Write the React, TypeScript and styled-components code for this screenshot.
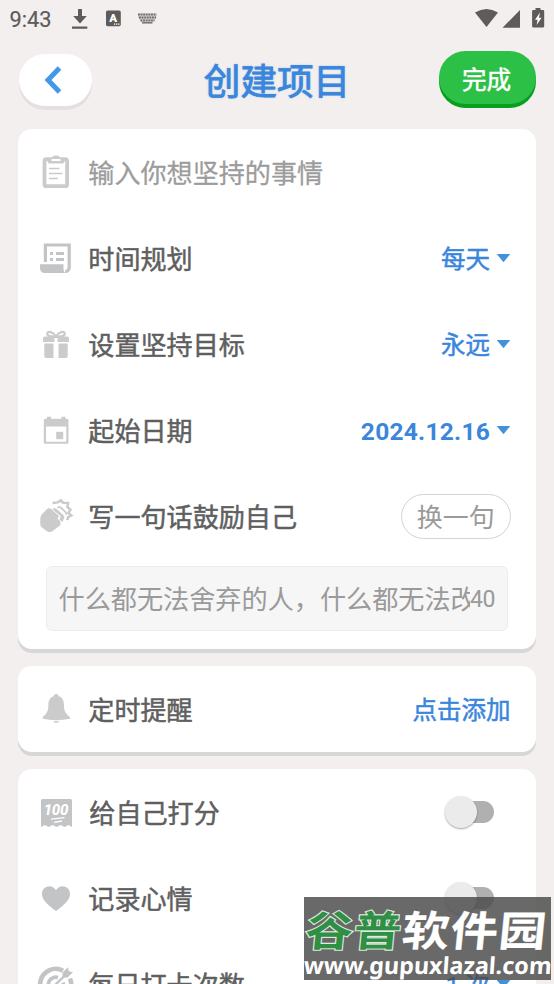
import React from 'react';
import styled, { createGlobalStyle } from 'styled-components';

const Global = createGlobalStyle`
  * { box-sizing: border-box; }
  html, body { margin: 0; padding: 0; background: #f2efee; overflow: hidden; }
  body { font-family: Roboto, "Noto Sans CJK SC", sans-serif; }
`;

const BLUE = '#3a86dc';

const Screen = styled.div`
  position: relative;
  width: 554px;
  height: 984px;
  overflow: hidden;
  background: #f2efee;
`;

const StatusBar = styled.div`
  height: 38px;
  display: flex;
  align-items: center;
  justify-content: space-between;
  padding: 0 9px;
  color: #5e5b5a;
`;

const StatusGroup = styled.div`
  display: flex;
  align-items: center;
`;

const Clock = styled.span`
  width: 62px;
  padding: 2px 0 0 0.5px;
  font-size: 21.8px;
  line-height: 38px;
  -webkit-text-stroke: 0.2px #5e5b5a;
`;

const Header = styled.header`
  height: 91px;
  display: flex;
  align-items: flex-start;
  justify-content: space-between;
  padding: 13px 18px 0 18.5px;
`;

const BackButton = styled.button`
  width: 73.5px;
  height: 52px;
  margin-top: 3px;
  padding: 0 4px 0 0;
  border: 0;
  border-radius: 26px;
  background: #fff;
  box-shadow: 0 4px 0 #e3e0df;
  display: flex;
  align-items: center;
  justify-content: center;
`;

const Title = styled.h1`
  margin: 0 0 0 23px;
  padding-top: 3px;
  font-size: 36.6px;
  line-height: 58px;
  font-weight: 400;
  color: ${BLUE};
  -webkit-text-stroke: 0.8px ${BLUE};
  text-shadow: 0 0 2px rgba(58, 134, 220, 0.5);
`;

const DoneButton = styled.button`
  width: 97px;
  height: 53px;
  padding: 7px 2px 0 0;
  border: 0;
  border-radius: 27px;
  background: #2dc046;
  box-shadow: 0 4px 0 #06a01e;
  font: 400 24.6px/46px Roboto, "Noto Sans CJK SC", sans-serif;
  color: #fff;
  -webkit-text-stroke: 0.5px #fff;
`;

const Card = styled.section<{ $bottom?: number }>`
  width: 517.5px;
  margin: 0 0 17px 18px;
  padding-bottom: ${p => p.$bottom ?? 0}px;
  border-radius: 14px;
  background: #fff;
  box-shadow: 0 4px 0 #d8d7d7;
`;

const RowBox = styled.div`
  height: 86px;
  display: flex;
  align-items: center;
  padding: 0 25px 0 20px;
`;

const Icon = styled.svg`
  width: 36px;
  height: 36px;
  margin-right: 14px;
  flex: none;
  overflow: visible;
`;

const Label = styled.span<{ $muted?: boolean; $shift?: number }>`
  flex: 1;
  margin-left: ${p => p.$shift ?? 0.3}px;
  padding-top: 3px;
  font-size: 26.1px;
  line-height: 40px;
  white-space: nowrap;
  color: ${p => (p.$muted ? '#9c9c9c' : '#5f5f5f')};
  -webkit-text-stroke: ${p => (p.$muted ? '0.3px #9c9c9c' : '0.5px #5f5f5f')};
`;

const Value = styled.span<{ $bold?: boolean }>`
  padding-top: 3px;
  font-size: 24.5px;
  line-height: 40px;
  font-weight: ${p => (p.$bold ? 700 : 400)};
  letter-spacing: ${p => (p.$bold ? '0.25px' : '0')};
  color: ${BLUE};
  -webkit-text-stroke: ${p => (p.$bold ? '0' : '0.5px')} ${BLUE};
`;

const Caret = styled.span`
  width: 14px;
  height: 8.5px;
  margin: 0 0 0 6.5px;
  background: #4391da;
  clip-path: polygon(0 0, 100% 0, 50% 100%);
`;

const SwapButton = styled.button`
  width: 109.5px;
  height: 45px;
  padding: 3px 0 0;
  border: 1px solid #d3d3d3;
  border-radius: 23px;
  background: #fff;
  font: 400 26px/40px Roboto, "Noto Sans CJK SC", sans-serif;
  color: #9a9a9a;
`;

const Motto = styled.div`
  width: 462px;
  height: 65px;
  margin: 7px 0 0 28px;
  padding: 2px 12px 0 11.5px;
  display: flex;
  align-items: center;
  border: 1px solid #ececec;
  border-radius: 6px;
  background: #f6f6f6;
  color: #9a9a9a;
`;

const MottoText = styled.span`
  flex: 1;
  overflow: hidden;
  white-space: nowrap;
  font-size: 26.15px;
  line-height: 44px;
`;

const Count = styled.span`
  font-size: 23px;
  line-height: 44px;
  letter-spacing: -0.4px;
`;

const Track = styled.span`
  width: 47px;
  height: 22px;
  margin: 0 17px 1px 0;
  display: flex;
  align-items: center;
  border-radius: 11px;
  background: linear-gradient(90deg, transparent 16px, #b0b0b0 16px);
`;

const Thumb = styled.span`
  width: 32px;
  height: 32px;
  margin-left: -2px;
  flex: none;
  border-radius: 50%;
  background: #ebebeb;
  box-shadow: 0 1px 2px rgba(0, 0, 0, 0.35);
`;

const Watermark = styled.div`
  position: absolute;
  left: 303.5px;
  top: 897px;
  width: 247.5px;
  height: 83px;
  background: rgba(75, 75, 75, 0.83);
  overflow: hidden;
`;

const Brand = styled.div`
  height: 56px;
  width: 220px;
  padding: 11px 0 0 2px;
  display: flex;
  font-size: 41.5px;
  line-height: 48px;
  font-weight: 700;
  letter-spacing: 0.9px;
  white-space: nowrap;
  color: #fff;
  transform: scaleX(1.14) skewX(-5deg);
  transform-origin: 0 50%;
  -webkit-text-stroke: 0.2px #fff;
`;

const BrandGreen = styled.span`
  color: #2f8f45;
  -webkit-text-stroke: 2.2px #dcebdd;
  paint-order: stroke fill;
`;

const Site = styled.div`
  width: 247px;
  font: 700 23.3px/24px "Noto Sans", sans-serif;
  letter-spacing: 0;
  white-space: nowrap;
  color: #fff;
  transform: skewX(-4deg);
`;

const G = '#cbcbcb';
const C = '#c2c4c6';

const ClipboardIcon = () => (
  <Icon viewBox="0 0 36 36">
    <rect x="6.5" y="5.2" width="22.6" height="27" rx="2" fill="none" stroke={G} strokeWidth="3.8" />
    <path d="M9.5 4h4.2c.3-1.600 1.800-2.600 4.300-2.600s4 1 4.300 2.600h4.200v3.400q0 2-2 2h-13q-2 0-2-2z" fill={G} />
    <rect x="13.5" y="5" width="9" height="2" fill="#fff" />
    <path d="M11 14.500h10.500M11 19.500h13.500M11 24.500h9" stroke={G} strokeWidth="1.6" />
  </Icon>
);

const ScrollIcon = () => (
  <Icon viewBox="0 0 36 36">
    <path d="M7.400 22V5h23.800v22.500a4 4 0 0 1-4 4" fill="none" stroke={C} strokeWidth="3.2" />
    <path d="M2 24.300h23.500v5.200q0 2.500 2.500 3.500H7q-5 0-5-5z" fill={C} />
    <path d="M12 13.500h3M18 13.500h8M12 19.500h3M18 19.500h8" stroke={C} strokeWidth="2.8" />
  </Icon>
);

const GiftIcon = () => (
  <Icon viewBox="0 0 36 36">
    <path d="M7 10.500h9.500V16H5v-3.500q0-2 2-2zM19.500 10.500H29q2 0 2 2V16H19.500zM6.300 17.500h9.200V32H8.300q-2 0-2-2zM20.500 17.500h9.200V30q0 2-2 2h-7.200z" fill={G} />
    <path d="M18 10.500C15 5.500 10 5 9.300 7.300S12 10.800 18 10.500zM18 10.500c3-5 8-5.500 8.700-3.200S24 10.800 18 10.500z" fill="none" stroke={G} strokeWidth="2.2" />
    <path d="M15 10.500h6V12h-6z" fill={G} />
  </Icon>
);

const CalendarIcon = () => (
  <Icon viewBox="0 0 36 36">
    <path fillRule="evenodd" d="M9 4.800h4v2h10.500v-2h4v2H29q1.500 0 1.500 1.500v22q0 1.500-1.500 1.500H7.300q-1.500 0-1.500-1.500v-22q0-1.500 1.500-1.500H9zM8 14.500v15.200h20.300V14.500z" fill={G} />
    <rect x="18.2" y="19.8" width="7" height="7.4" fill={G} />
  </Icon>
);

const FistIcon = () => (
  <Icon viewBox="0 0 36 36">
    <path d="M2.300 20.500q.2-2.500 1.600-4.200l4.900-5q2-1.800 4.200-.6l2 1.600 6 5.500-1.500 3 2.800 2 .2 4.200-8.200 6.200q-2.600 1.600-5 .4L4 29.500q-1.800-1.300-1.800-4z" fill={G} />
    <path d="M14.200 10.500q2.500-1.600 4.600.3l6.800 6q1.700 1.700.9 3.400l-1.400 3.400q-.9 1.300-2.100 0l-2-2.200 1.200-3.200-7-5.700z" fill={G} stroke="#fff" strokeWidth=".9" />
    <path d="M14.500 5l5.200-.6 3.200-2 2.200 2.300 5 .3-.7 4 3.100 2.800-2.100 3 2.900 2.700-3.300 1.600-.5 3" fill="none" stroke={G} strokeWidth="2.5" />
    <path d="M19.500 9.300q2.500-.6 4 .9l4 4q1 1.300.6 2.600" fill="none" stroke={G} strokeWidth="1.8" />
  </Icon>
);

const BellIcon = () => (
  <Icon viewBox="0 0 36 36">
    <path d="M18.200 3q2.300 0 2.500 2.200c4 1.300 5.200 4.300 5.200 8.800 0 7 2.600 9 6.100 12.300v1.500q-13.800 2.800-27.400 0v-1.500c3.500-3.300 5.800-5.300 5.800-12.300 0-4.500 1.500-7.500 5.300-8.800Q16 3 18.200 3zM14.800 30.200h6.800q-3.400 3.600-6.800 0z" fill={G} />
  </Icon>
);

const ScoreIcon = () => (
  <Icon viewBox="0 0 36 36">
    <path d="M3 6.500Q3 5 4.500 5h28Q34 5 34 6.500V33l-3.500-2-3.800 2-4-2-4 2-4-2-4 2-4-2L3 33z" fill={C} />
    <text x="5.800" y="21.400" fontFamily="Roboto" fontStyle="italic" fontWeight="800" fontSize="15" textLength="24.500" fill="#fff">100</text>
    <path d="M13 25.200l13.500-1.500M16 28.300l8-1.300" stroke="#fff" strokeWidth="1.3" />
  </Icon>
);

const HeartIcon = () => (
  <Icon viewBox="0 0 36 36">
    <path d="M18 31C13 27 4 21.500 4 14c0-8 10-10.500 14-3.700C22 3.500 32 6 32 14c0 7.500-9 13-14 17z" fill={C} />
  </Icon>
);

const TargetIcon = () => (
  <Icon viewBox="0 0 36 36">
    <path d="M25 4.700A15.500 15.500 0 1 0 32 12.500" fill="none" stroke={C} strokeWidth="4.6" />
    <path d="M20 11.500a7.500 7.500 0 1 0 5 5" fill="none" stroke={C} strokeWidth="3.6" />
    <path d="M17 19L29 7.500" stroke={C} strokeWidth="2.4" />
    <path d="M24.500 11.500V6.500l5.500-5.300.8 4 4.200 1-5.500 5.300z" fill={C} />
  </Icon>
);

type RowProps = {
  icon: React.ReactNode;
  label: string;
  muted?: boolean;
  shift?: number;
  children?: React.ReactNode;
};

const Row = ({ icon, label, muted, shift, children }: RowProps) => (
  <RowBox>
    {icon}
    <Label $muted={muted} $shift={shift}>{label}</Label>
    {children}
  </RowBox>
);

const Picker = ({ text, bold }: { text: string; bold?: boolean }) => (
  <>
    <Value $bold={bold}>{text}</Value>
    <Caret />
  </>
);

const Switch = () => (
  <Track><Thumb /></Track>
);

const LeftStatusIcons = () => (
  <svg width="86" height="38" viewBox="71 0 86 38">
    <path d="M78 9h4v7h4.800l-6.800 7.500L73.200 16H78zM72 26.500h15.300v2.300H72z" fill="#5e5b5a" />
    <rect x="106" y="10.500" width="14.800" height="15.700" rx="1.600" fill="#5e5b5a" />
    <text x="109.200" y="21.800" fontFamily="Roboto" fontWeight="900" fontSize="11.500" fill="#fff">A</text>
    <path d="M114 24.200h6" stroke="#fff" strokeWidth="1.300" strokeDasharray="1.300 .8" />
    <path d="M138 14.600h18.500M139 17.600h17M140.500 20.500h14" stroke="#77706e" strokeWidth="2" strokeDasharray="1.900 .7" />
    <path d="M138 13.500h18.500v4l-3 4.200h-12.500l-3-4.200z" fill="#77706e" opacity=".25" />
    <path d="M142 22.800h10.500" stroke="#77706e" strokeWidth="1.500" />
  </svg>
);

const RightStatusIcons = () => (
  <svg width="71" height="38" viewBox="474 0 71 38">
    <path d="M475 12.500q11.500-7 23 0L486.500 27z" fill="#5e5b5a" />
    <path d="M520 10v17.700h-17.500z" fill="#5e5b5a" />
    <path d="M535.500 8h5v2H543q1.200 0 1.200 1.200v15q0 1.300-1.200 1.300h-9.700q-1.200 0-1.200-1.300v-15q0-1.200 1.200-1.200h2.200z" fill="#5e5b5a" />
    <path d="M540 12.500l-5 7.200h2.600l-1 5.300 5-7.300h-2.700z" fill="#fff" />
  </svg>
);

export default function App() {
  return (
    <Screen>
      <Global />
      <StatusBar>
        <StatusGroup><Clock>9:43</Clock><LeftStatusIcons /></StatusGroup>
        <RightStatusIcons />
      </StatusBar>
      <Header>
        <BackButton aria-label="返回">
          <svg width="20" height="28" viewBox="0 0 20 28">
            <path d="M16.500 2L5 14l11.500 12" fill="none" stroke="#4298ec" strokeWidth="5" />
          </svg>
        </BackButton>
        <Title>创建项目</Title>
        <DoneButton>完成</DoneButton>
      </Header>
      <Card $bottom={18}>
        <Row icon={<ClipboardIcon />} label="输入你想坚持的事情" muted />
        <Row icon={<ScrollIcon />} label="时间规划"><Picker text="每天" /></Row>
        <Row icon={<GiftIcon />} label="设置坚持目标"><Picker text="永远" /></Row>
        <Row icon={<CalendarIcon />} label="起始日期"><Picker text="2024.12.16" bold /></Row>
        <Row icon={<FistIcon />} label="写一句话鼓励自己"><SwapButton>换一句</SwapButton></Row>
        <Motto>
          <MottoText>什么都无法舍弃的人，什么都无法改变</MottoText>
          <Count>40</Count>
        </Motto>
      </Card>
      <Card>
        <Row icon={<BellIcon />} label="定时提醒"><Value>点击添加</Value></Row>
      </Card>
      <Card>
        <Row icon={<ScoreIcon />} label="给自己打分" shift={1.3}><Switch /></Row>
        <Row icon={<HeartIcon />} label="记录心情"><Switch /></Row>
        <Row icon={<TargetIcon />} label="每日打卡次数"><Picker text="1 次" /></Row>
      </Card>
      <Watermark>
        <Brand><BrandGreen>谷普</BrandGreen><span>软件园</span></Brand>
        <Site>www.gupuxlazal.com</Site>
      </Watermark>
    </Screen>
  );
}
